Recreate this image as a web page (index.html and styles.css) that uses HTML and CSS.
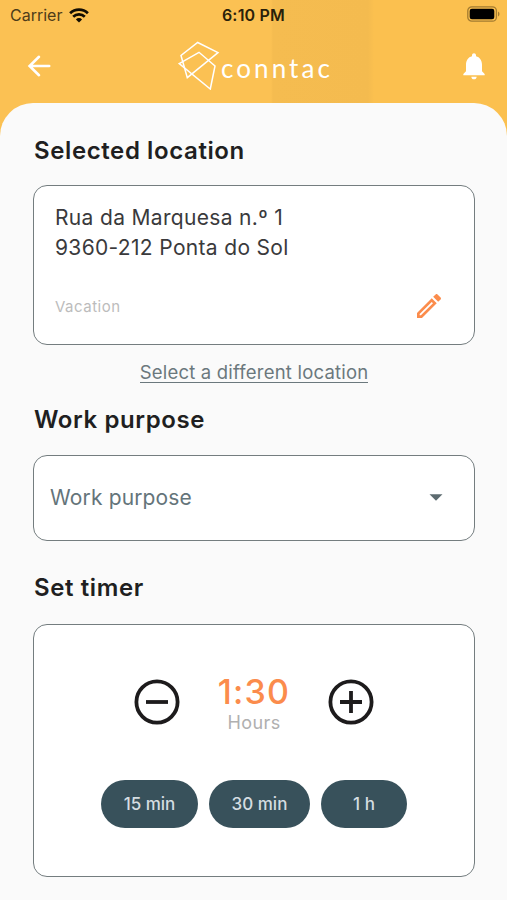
FILE: index.html
```html
<!DOCTYPE html>
<html lang="en">
<head>
    <meta charset="UTF-8">
    <meta name="viewport" content="width=device-width, initial-scale=1.0">
    <title>Conntac</title>
    <link rel="stylesheet" href="styles.css">
</head>
<body>
    <header class="header">
        <div class="status-bar">
            <div class="carrier">
                <span>Carrier</span>
                <svg width="20" height="15" viewBox="0 0 20 15" fill="none" stroke="#120d02" stroke-width="2.7">
                    <path d="M1.1 5.3a12.6 12.6 0 0 1 17.8 0"/>
                    <path d="M4.2 8.7a8.2 8.2 0 0 1 11.6 0"/>
                    <path d="M10 14.6L6.9 11.4a4.4 4.4 0 0 1 6.2 0z" fill="#120d02" stroke="none"/>
                </svg>
            </div>
            <div class="time">6:10 PM</div>
            <svg class="battery" width="33" height="16" viewBox="0 0 33 16">
                <rect x="0.8" y="0.8" width="28.6" height="14.4" rx="4" fill="none" stroke="#a37b30" stroke-width="1.3"/>
                <rect x="2.7" y="2.8" width="24.6" height="10.4" rx="2.2" fill="#000"/>
                <path d="M31 5.6q1.5 .6 1.5 2.4t-1.5 2.4z" fill="#a37b30"/>
            </svg>
        </div>
        <div class="nav">
            <svg width="30" height="30" viewBox="0 0 30 30" fill="none" stroke="#fff" stroke-width="2.6" stroke-linecap="round">
                <path d="M25.2 15H6M15 5.8L5.6 15l9.4 9.2"/>
            </svg>
            <div class="logo">
                <svg width="44" height="50" viewBox="0 0 44 50" fill="none" stroke="#fff" stroke-width="1.5">
                    <path d="M20.7 2.5L41 12.7 10.3 37.7 4 15.5z"/>
                    <path d="M2.2 23.6L22 12.3 38 26 33.3 49z"/>
                </svg>
                <span class="logo-text">conntac</span>
            </div>
            <svg width="32" height="32" viewBox="0 0 24 24" fill="#fff">
                <path d="M12 22c1.1 0 2-.9 2-2h-4c0 1.1.89 2 2 2zm6-6v-5c0-3.07-1.64-5.64-4.5-6.32V4c0-.83-.67-1.5-1.5-1.5s-1.5.67-1.5 1.5v.68C7.63 5.36 6 7.92 6 11v5l-2 2v1h16v-1l-2-2z"/>
            </svg>
        </div>
    </header>

    <main class="panel">
        <h2>Selected location</h2>
        <div class="card location">
            <p class="address">Rua da Marquesa n.º 1<br>9360-212 Ponta do Sol</p>
            <div class="location-footer">
                <span class="tag">Vacation</span>
                <svg width="32" height="32" viewBox="0 0 24 24" fill="#fb8c4c">
                    <path d="M14.06 9.02l.92.92L5.92 19H5v-.92l9.06-9.06M17.66 3c-.25 0-.51.1-.7.29l-1.83 1.83 3.75 3.75 1.83-1.83c.39-.39.39-1.02 0-1.41l-2.34-2.34c-.2-.2-.45-.29-.71-.29zm-3.6 3.19L3 17.25V21h3.75L17.81 9.94l-3.75-3.75z"/>
                </svg>
            </div>
        </div>
        <a class="link">Select a different location</a>

        <h2>Work purpose</h2>
        <div class="card select">
            <span>Work purpose</span>
            <svg width="14" height="7" viewBox="0 0 14 7" fill="#5d6b70">
                <path d="M0.5 0.3h13L7 6.8z"/>
            </svg>
        </div>

        <h2>Set timer</h2>
        <div class="card timer">
            <div class="timer-row">
                <svg width="46" height="46" viewBox="0 0 46 46" fill="none" stroke="#1d1b1c" stroke-width="3.8">
                    <circle cx="23" cy="23" r="20.6"/>
                    <path d="M12 23h22"/>
                </svg>
                <div class="timer-value">
                    <div class="value">1:30</div>
                    <div class="unit">Hours</div>
                </div>
                <svg width="46" height="46" viewBox="0 0 46 46" fill="none" stroke="#1d1b1c" stroke-width="3.8">
                    <circle cx="23" cy="23" r="20.6"/>
                    <path d="M12 23h22M23 12v22"/>
                </svg>
            </div>
            <div class="chips">
                <button class="chip">15 min</button>
                <button class="chip chip-wide">30 min</button>
                <button class="chip chip-small">1 h</button>
            </div>
        </div>
    </main>
</body>
</html>
```
FILE: styles.css
```css
* {
    box-sizing: border-box;
}
body {
    margin: 0;
    height: 900px;
    overflow: hidden;
    font-family: Inter, sans-serif;
    color: #1f1f21;
    background: linear-gradient(90deg, #fbc153 0 271px, #f5bc50 273px, #f4bb4f 368px, #fbc04f 374px);
}
svg {
    display: block;
    flex: none;
}
.header {
    height: 103px;
}
.status-bar {
    display: grid;
    grid-template-columns: 1fr auto 1fr;
    align-items: center;
    height: 30px;
    padding: 0 7px 0 10px;
}
.carrier {
    display: flex;
    align-items: center;
    gap: 7px;
    font-size: 16px;
    color: #4e3c19;
}
.time {
    margin-right: 3px;
    font-size: 16px;
    font-weight: 600;
    letter-spacing: 0.2px;
    color: #2a1f0a;
}
.battery {
    justify-self: end;
    margin-bottom: 2px;
}
.nav {
    display: flex;
    align-items: center;
    justify-content: space-between;
    height: 72px;
    padding: 0 17px 0 24px;
}
.logo {
    display: flex;
    align-items: center;
    height: 54px;
    margin-right: 2px;
    color: #fff;
}
.logo svg {
    margin-bottom: 2px;
}
.logo-text {
    padding-top: 3px;
    font-family: Lato, sans-serif;
    font-size: 26px;
    letter-spacing: 3.1px;
}
.panel {
    display: flex;
    flex-direction: column;
    height: 797px;
    padding: 0 32px 0 33px;
    border-radius: 33px 33px 0 0;
    background: #fafafa;
}
h2 {
    margin: 0 1px;
    font-size: 24px;
    line-height: 30px;
    font-weight: 600;
    letter-spacing: 0.6px;
}
.panel h2:first-child {
    margin-top: 33px;
}
.card {
    border: 1px solid #747d7f;
    border-radius: 14px;
    background: #fff;
}
.location {
    height: 160px;
    margin-top: 19px;
    padding: 17px 29px 0 21px;
}
.address {
    margin: 0;
    font-size: 21px;
    line-height: 30px;
    letter-spacing: 0.33px;
    color: #3a3a3c;
}
.location-footer {
    display: flex;
    align-items: center;
    justify-content: space-between;
    margin-top: 27px;
}
.tag {
    font-size: 15px;
    letter-spacing: 0.5px;
    color: #bcbcbc;
}
.link {
    align-self: center;
    margin: 17px 0 22px;
    border-bottom: 1px solid #6b787d;
    font-size: 18.5px;
    line-height: 20px;
    letter-spacing: 0.2px;
    color: #6b787d;
}
.select {
    display: flex;
    align-items: center;
    justify-content: space-between;
    height: 86px;
    margin: 20px 0 32px;
    padding: 0 31px 2px 16px;
    font-size: 21px;
    letter-spacing: 0.15px;
    color: #64747a;
}
.timer {
    height: 253px;
    margin-top: 21px;
    padding-top: 47px;
}
.timer-row {
    display: flex;
    justify-content: center;
    align-items: center;
    gap: 37px;
    height: 60px;
}
.timer-value {
    width: 74px;
    padding-top: 4px;
    text-align: center;
    white-space: nowrap;
}
.value {
    font-size: 34px;
    line-height: 36px;
    font-weight: 500;
    letter-spacing: 1.2px;
    color: #fb8c4c;
}
.unit {
    font-size: 18px;
    line-height: 25px;
    letter-spacing: 0.4px;
    color: #b0b0b0;
}
.chips {
    display: flex;
    justify-content: center;
    gap: 11px;
    margin-top: 48px;
}
.chip {
    width: 97px;
    height: 48px;
    padding: 0;
    border: none;
    border-radius: 24px;
    background: #38515b;
    color: #d5dde1;
    font-family: inherit;
    font-size: 17px;
    font-weight: 500;
}
.chip-wide {
    width: 101px;
}
.chip-small {
    width: 86px;
}
```
